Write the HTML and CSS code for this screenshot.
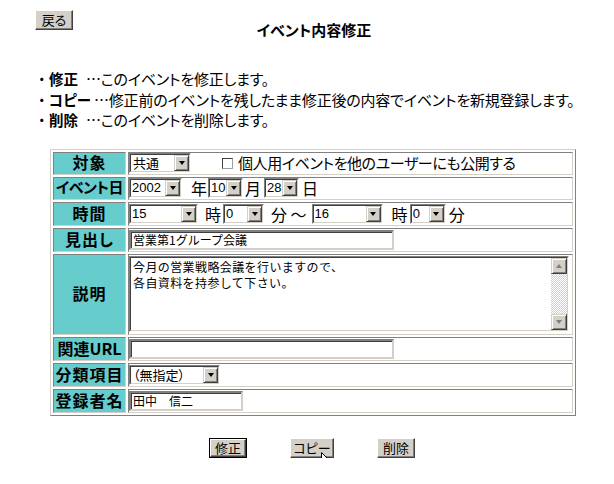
FILE: index.html
```html
<!DOCTYPE html>
<html lang="ja">
<head>
<meta charset="utf-8">
<title>イベント内容修正</title>
<link rel="stylesheet" href="styles.css">
</head>
<body>
<div class="page">
  <div class="head">
    <button class="btn back" type="button">戻る</button>
    <h1 class="title">イベント内容修正</h1>
  </div>

  <ul class="notes">
    <li><span class="dot">・</span><b class="nl">修正</b><span class="nd">…このイベントを修正します。</span></li>
    <li><span class="dot">・</span><b class="nl">コピー</b><span class="nd">…修正前のイベントを残したまま修正後の内容でイベントを新規登録します。</span></li>
    <li><span class="dot">・</span><b class="nl">削除</b><span class="nd">…このイベントを削除します。</span></li>
  </ul>

  <table class="form">
    <tr class="r1">
      <th>対象</th>
      <td>
        <div class="line">
          <span class="sel w62"><span class="si"><select><option>共通</option></select><span class="arr"></span></span></span>
          <label class="pub"><input type="checkbox" class="cb"><span>個人用イベントを他のユーザーにも公開する</span></label>
        </div>
      </td>
    </tr>
    <tr class="r2">
      <th class="tight">イベント日</th>
      <td>
        <div class="line">
          <span class="sel w53"><span class="si"><select class="num"><option>2002</option></select><span class="arr"></span></span></span>
          <span class="u u-year">年</span>
          <span class="sel w35"><span class="si"><select class="num"><option>10</option></select><span class="arr"></span></span></span>
          <span class="u u-month">月</span>
          <span class="sel w35"><span class="si"><select class="num"><option>28</option></select><span class="arr"></span></span></span>
          <span class="u u-day">日</span>
        </div>
      </td>
    </tr>
    <tr class="r3">
      <th>時間</th>
      <td>
        <div class="line">
          <span class="sel w69"><span class="si"><select class="num"><option>15</option></select><span class="arr"></span></span></span>
          <span class="u u-hour">時</span>
          <span class="sel w41"><span class="si"><select class="num"><option>0</option></select><span class="arr"></span></span></span>
          <span class="u u-min">分 ～</span>
          <span class="sel w71"><span class="si"><select class="num"><option>16</option></select><span class="arr"></span></span></span>
          <span class="u u-hour2">時</span>
          <span class="sel w36"><span class="si"><select class="num"><option>0</option></select><span class="arr"></span></span></span>
          <span class="u u-min2">分</span>
        </div>
      </td>
    </tr>
    <tr class="r4">
      <th>見出し</th>
      <td><div class="line"><input class="txt w265" type="text" value="営業第1グループ会議"></div></td>
    </tr>
    <tr class="r5">
      <th>説明</th>
      <td>
        <div class="ta">
          <textarea>今月の営業戦略会議を行いますので、
各自資料を持参して下さい。</textarea>
          <div class="sb">
            <span class="sbb"><span class="tri up"></span></span>
            <span class="track"></span>
            <span class="sbb"><span class="tri down"></span></span>
          </div>
        </div>
      </td>
    </tr>
    <tr class="r6">
      <th class="url">関連URL</th>
      <td><div class="line"><input class="txt w265" type="text" value=""></div></td>
    </tr>
    <tr class="r7">
      <th>分類項目</th>
      <td>
        <div class="line">
          <span class="sel w91"><span class="si"><select><option>（無指定）</option></select><span class="arr"></span></span></span>
        </div>
      </td>
    </tr>
    <tr class="r8">
      <th>登録者名</th>
      <td><div class="line"><input class="txt w114" type="text" value="田中　信二"></div></td>
    </tr>
  </table>

  <div class="actions">
    <span class="defbtn"><button class="btn" type="button">修正</button></span>
    <span class="copywrap">
      <button class="btn copy" type="button">コピー</button>
      <svg class="cursor" width="13" height="20" viewBox="0 0 13 20" aria-hidden="true">
        <path d="M0.5 0.5 L0.5 16.5 L4.5 12.5 L7.5 18.5 L9.5 17.5 L6.5 11.5 L11.5 11.5 Z" fill="#fff" stroke="#000" stroke-width="1"/>
      </svg>
    </span>
    <button class="btn" type="button">削除</button>
  </div>
</div>
</body>
</html>
```

FILE: styles.css
```css
html, body {
  margin: 0;
  padding: 0;
  background: #fff;
}
body {
  font-family: "Noto Sans CJK JP", "Noto Sans", sans-serif;
  color: #000;
  font-size: 15px;
  font-feature-settings: "palt";
}
.page {
  padding-top: 10px;
}

/* Windows-classic button */
.btn {
  box-sizing: border-box;
  height: 20px;
  min-width: 38px;
  padding: 0 2px;
  margin: 0;
  font-family: "Noto Sans CJK JP", sans-serif;
  font-feature-settings: "palt";
  font-size: 13px;
  line-height: 16px;
  color: #000;
  background: #d4d0c8;
  border: 1px solid;
  border-color: #fff #404040 #404040 #fff;
  box-shadow: inset -1px -1px #808080;
  white-space: nowrap;
}

/* header */
.head {
  display: flex;
  flex-direction: column;
}
.back {
  width: 38px;
  margin-left: 35px;
  align-self: flex-start;
}
.title {
  margin: -10px 0 0 0;
  padding-left: 14px;
  font-size: 15px;
  font-weight: bold;
  line-height: 20px;
  text-align: center;
}

/* notes */
.notes {
  list-style: none;
  margin: 29px 0 0 0;
  padding: 0 0 0 38px;
  font-size: 15px;
  line-height: 20.5px;
  letter-spacing: -0.2px;
}
.notes li {
  display: flex;
  white-space: nowrap;
}
.dot {
  width: 11px;
}
.nl {
  min-width: 34px;
  margin-right: 3px;
  font-size: 14.5px;
  font-weight: bold;
  letter-spacing: 0;
}

/* form table */
.form {
  margin: 18px 0 0 50px;
  width: 526px;
  border-collapse: separate;
  border-spacing: 2px;
  border: 1px solid;
  border-color: #d4d0c8 #808080 #808080 #d4d0c8;
}
.form th,
.form td {
  box-sizing: border-box;
  padding: 0;
  border: 1px solid;
  border-color: #808080 #d4d0c8 #d4d0c8 #808080;
}
.form th {
  width: 73px;
  padding-bottom: 2px;
  background: #66cccc;
  font-size: 16px;
  font-weight: bold;
  letter-spacing: 1px;
  text-align: center;
  white-space: nowrap;
  line-height: 18px;
}
.form th.tight {
  font-size: 15px;
  letter-spacing: -0.5px;
}
.form th.url {
  letter-spacing: 0;
}
.form td {
  vertical-align: middle;
}
.r1 th, .r1 td { height: 23px; }
.r2 th, .r2 td { height: 23px; }
.r3 th, .r3 td { height: 24px; }
.r4 th, .r4 td { height: 24px; }
.r5 th, .r5 td { height: 81px; }
.r6 th, .r6 td { height: 24px; }
.r7 th, .r7 td { height: 24px; }
.r8 th, .r8 td { height: 24px; }

.line {
  display: flex;
  align-items: center;
  font-size: 16px;
  line-height: 20px;
  white-space: nowrap;
}
.u-year  { padding: 0 1px 0 9px; }
.u-month { padding: 0 3px 0 2px; }
.u-day   { padding: 0 0 0 3px; }
.u-hour  { padding: 0 2px 0 7px; }
.u-min   { padding: 0 5px 0 7px; }
.u-hour2 { padding: 0 2px 0 9px; }
.u-min2  { padding: 0 0 0 3px; }

/* select imitation */
.sel {
  box-sizing: border-box;
  display: inline-flex;
  height: 20px;
  border: 1px solid;
  border-color: #808080 #fff #fff #808080;
  background: #fff;
  flex: none;
}
.si {
  display: flex;
  flex: 1;
  min-width: 0;
  border: 1px solid;
  border-color: #404040 #d4d0c8 #d4d0c8 #404040;
}
.sel select {
  -webkit-appearance: none;
  appearance: none;
  flex: 1;
  min-width: 0;
  border: 0;
  margin: 0;
  padding: 0 0 0 2px;
  background: transparent;
  font-family: "Noto Sans CJK JP", sans-serif;
  font-feature-settings: "palt";
  font-size: 13px;
  line-height: 16px;
  color: #000;
  outline: none;
}
.sel select.num {
  font-family: "Liberation Sans", "DejaVu Sans", sans-serif;
  font-size: 13px;
  padding-left: 1px;
}
.arr {
  box-sizing: border-box;
  width: 15px;
  flex: none;
  background: #d4d0c8;
  border: 1px solid;
  border-color: #d4d0c8 #404040 #404040 #d4d0c8;
  box-shadow: inset 1px 1px #fff, inset -1px -1px #808080;
  display: flex;
  align-items: center;
  justify-content: center;
}
.arr::before {
  content: "";
  width: 0;
  height: 0;
  border-left: 3.5px solid transparent;
  border-right: 3.5px solid transparent;
  border-top: 4px solid #000;
}
.w35 { width: 35px; }
.w36 { width: 36px; }
.w41 { width: 41px; }
.w53 { width: 53px; }
.w62 { width: 62px; }
.w69 { width: 69px; }
.w71 { width: 71px; }
.w91 { width: 91px; }

/* checkbox */
.pub {
  display: flex;
  align-items: center;
  margin-left: 31px;
  font-size: 15px;
  letter-spacing: -0.4px;
}
.cb {
  -webkit-appearance: none;
  appearance: none;
  box-sizing: border-box;
  width: 11px;
  height: 11px;
  margin: 1px 5px 0 0;
  background: #fff;
  border: 1px solid;
  border-color: #404040 #a0a0a0 #a0a0a0 #404040;
}

/* text inputs */
.txt {
  box-sizing: border-box;
  height: 20px;
  margin: 0;
  padding: 0 2px;
  border: 2px solid;
  border-color: #808080 #d4d0c8 #d4d0c8 #808080;
  box-shadow: inset 1px 1px #404040;
  background: #fff;
  font-family: "Noto Sans CJK JP", sans-serif;
  font-size: 12px;
  line-height: 16px;
  color: #000;
  outline: none;
}
.w265 { width: 265px; }
.w114 { width: 114px; }

/* textarea */
.ta {
  box-sizing: border-box;
  display: flex;
  width: 440px;
  height: 76px;
  border: 1px solid;
  border-color: #808080 #fff #fff #808080;
  background: #fff;
}
.ta textarea {
  flex: 1;
  min-width: 0;
  resize: none;
  overflow: hidden;
  margin: 0;
  padding: 1px 2px;
  border: 1px solid;
  border-right: 0;
  border-color: #404040 transparent #d4d0c8 #404040;
  font-family: "Noto Sans CJK JP", sans-serif;
  font-size: 12px;
  letter-spacing: 0.4px;
  line-height: 16px;
  color: #000;
  background: #fff;
  outline: none;
}
.sb {
  display: flex;
  flex-direction: column;
  width: 16px;
  flex: none;
  border-top: 1px solid #404040;
  border-bottom: 1px solid #d4d0c8;
  border-right: 1px solid #d4d0c8;
}
.sbb {
  box-sizing: border-box;
  height: 16px;
  flex: none;
  background: #d4d0c8;
  border: 1px solid;
  border-color: #d4d0c8 #404040 #404040 #d4d0c8;
  box-shadow: inset 1px 1px #fff, inset -1px -1px #808080;
  display: flex;
  align-items: center;
  justify-content: center;
}
.track {
  flex: 1;
  background: repeating-conic-gradient(#fff 0 25%, #d4d0c8 0 50%) 0 0 / 2px 2px;
}
.tri {
  width: 0;
  height: 0;
  border-left: 3.5px solid transparent;
  border-right: 3.5px solid transparent;
}
.tri.up { border-bottom: 4px solid #808080; }
.tri.down { border-top: 4px solid #808080; }

/* action buttons */
.actions {
  display: flex;
  align-items: center;
  gap: 43px;
  margin-top: 22px;
  padding-left: 209px;
}
.defbtn {
  display: inline-flex;
  border: 1px solid #000;
}
.defbtn .btn {
  height: 18px;
  width: 36px;
  min-width: 0;
  line-height: 14px;
}
.copywrap {
  position: relative;
  display: inline-flex;
}
.copy {
  width: 44px;
}
.cursor {
  position: absolute;
  left: 31px;
  top: 14px;
}
```
